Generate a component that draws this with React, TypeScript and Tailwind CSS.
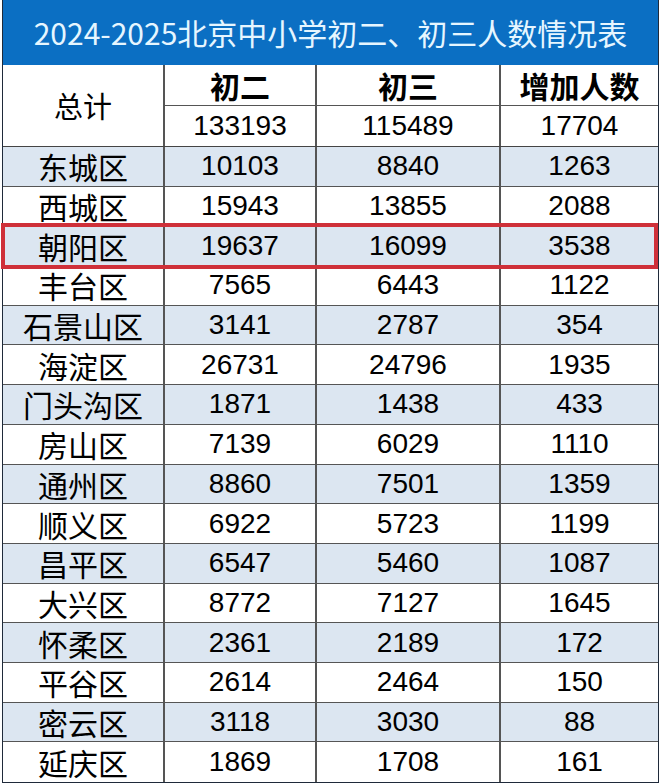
import React from "react";

const rows: [string, string, string, string][] = [
  ["东城区", "10103", "8840", "1263"],
  ["西城区", "15943", "13855", "2088"],
  ["朝阳区", "19637", "16099", "3538"],
  ["丰台区", "7565", "6443", "1122"],
  ["石景山区", "3141", "2787", "354"],
  ["海淀区", "26731", "24796", "1935"],
  ["门头沟区", "1871", "1438", "433"],
  ["房山区", "7139", "6029", "1110"],
  ["通州区", "8860", "7501", "1359"],
  ["顺义区", "6922", "5723", "1199"],
  ["昌平区", "6547", "5460", "1087"],
  ["大兴区", "8772", "7127", "1645"],
  ["怀柔区", "2361", "2189", "172"],
  ["平谷区", "2614", "2464", "150"],
  ["密云区", "3118", "3030", "88"],
  ["延庆区", "1869", "1708", "161"],
];

const cjk = "font-['Noto_Sans_CJK_SC',sans-serif]";
const num = "font-['Liberation_Sans','Noto_Sans_CJK_SC',sans-serif]";

export default function App() {
  return (
    <div className="w-[660px] h-[784px] bg-white pl-[2px] pr-[1px]">
      <div className="border-x border-b border-[#1f2a3a] text-black">
        {/* title */}
        <div className={`h-[65px] bg-[#0b6fc3] flex items-center justify-center text-[#e6f6ff] text-[30px] ${cjk}`}>
          2024-2025北京中小学初二、初三人数情况表
        </div>

        {/* header */}
        <div className="grid grid-cols-[162px_152px_184px_1fr] grid-rows-[41px_40px] border-b border-[#444]">
          <div className={`row-span-2 border-r-2 border-[#555] flex items-center justify-center text-[29px] ${cjk}`}>
            总计
          </div>
          <div className={`border-r-2 border-b border-[#555] flex items-center justify-center text-[30px] font-bold ${cjk}`}>
            初二
          </div>
          <div className={`border-r-2 border-b border-[#555] flex items-center justify-center text-[30px] font-bold ${cjk}`}>
            初三
          </div>
          <div className={`border-b border-[#555] flex items-center justify-center text-[30px] font-bold ${cjk}`}>
            增加人数
          </div>
          <div className={`border-r-2 border-[#555] flex items-center justify-center text-[28px] ${num}`}>133193</div>
          <div className={`border-r-2 border-[#555] flex items-center justify-center text-[28px] ${num}`}>115489</div>
          <div className={`flex items-center justify-center text-[28px] ${num}`}>17704</div>
        </div>

        {/* districts */}
        {rows.map((r, i) => (
          <div
            key={r[0]}
            className={`relative grid grid-cols-[162px_152px_184px_1fr] h-[39.7px] ${
              i < rows.length - 1 ? "border-b border-[#555]" : ""
            } ${i % 2 === 0 ? "bg-[#dce6f1]" : "bg-white"}`}
          >
            <div className={`border-r-2 border-[#555] flex items-center justify-center text-[30px] leading-none ${cjk}`}>
              {r[0]}
            </div>
            <div className={`border-r-2 border-[#555] flex items-center justify-center text-[28px] leading-none ${num}`}>
              {r[1]}
            </div>
            <div className={`border-r-2 border-[#555] flex items-center justify-center text-[28px] leading-none ${num}`}>
              {r[2]}
            </div>
            <div className={`flex items-center justify-center text-[28px] leading-none ${num}`}>{r[3]}</div>
            {r[0] === "朝阳区" && (
              <div className="absolute z-10 -top-[3px] -bottom-[4px] -left-[2px] right-[0px] border-4 border-[#cf3039] pointer-events-none" />
            )}
          </div>
        ))}
      </div>
    </div>
  );
}
